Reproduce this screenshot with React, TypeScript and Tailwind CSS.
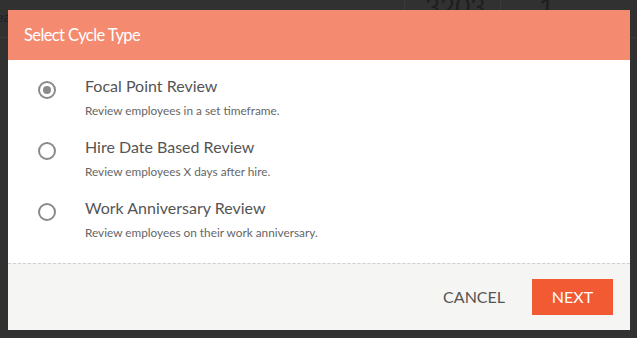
import { useState } from "react";

const options = [
  { id: "focal", title: "Focal Point Review", desc: "Review employees in a set timeframe." },
  { id: "hire", title: "Hire Date Based Review", desc: "Review employees X days after hire." },
  { id: "anniv", title: "Work Anniversary Review", desc: "Review employees on their work anniversary." },
];

export default function App() {
  const [sel, setSel] = useState("focal");

  return (
    <div className="relative w-[637px] h-[338px] overflow-hidden bg-[#313131] font-['Lato','Liberation_Sans',sans-serif]">
      {/* page behind the overlay */}
      <div className="flex h-[38px] border-b border-[#3a3a3a] text-[#1e1e1e]">
        <div className="w-[408px] pt-[6px] text-[14px] -ml-[4px]">ea</div>
        <div className="w-[96px] border-l border-[#3a3a3a] text-[26px] leading-none pl-[20px] -mt-[6px]">3203</div>
        <div className="flex-1 border-l border-[#3a3a3a] text-[26px] leading-none pl-[38px] -mt-[6px]">1</div>
      </div>

      <div className="absolute left-[8px] top-[10px] w-[622px] h-[320px] flex flex-col bg-white">
        <div className="h-[50px] bg-[#F48B70] flex items-center px-[16px]">
          <h2 className="text-[16.5px] tracking-[-0.6px] text-white">Select Cycle Type</h2>
        </div>

        <div className="flex-1 pt-[16px] pl-[30px]">
          {options.map(o => (
            <button key={o.id} onClick={() => setSel(o.id)} className="flex items-start text-left h-[61px] w-full">
              <span className="mt-[5px] w-[18px] h-[18px] rounded-full border-2 border-[#8a8a8a] flex items-center justify-center shrink-0">
                {sel === o.id && <span className="w-[8px] h-[8px] rounded-full bg-[#8a8a8a]" />}
              </span>
              <span className="ml-[29px] flex flex-col">
                <span className="text-[16px] leading-[20px] text-[#555]">{o.title}</span>
                <span className="text-[11.8px] leading-[14px] mt-[8px] text-[#666]">{o.desc}</span>
              </span>
            </button>
          ))}
        </div>

        <div className="h-[67px] bg-[#F5F5F3] border-t border-dashed border-[#cfcfcf] flex items-center justify-end pr-[17px]">
          <button className="text-[16px] text-[#555] mr-[27px]">CANCEL</button>
          <button className="w-[81px] h-[36px] bg-[#F15A32] text-white text-[16px]">NEXT</button>
        </div>
      </div>
    </div>
  );
}
